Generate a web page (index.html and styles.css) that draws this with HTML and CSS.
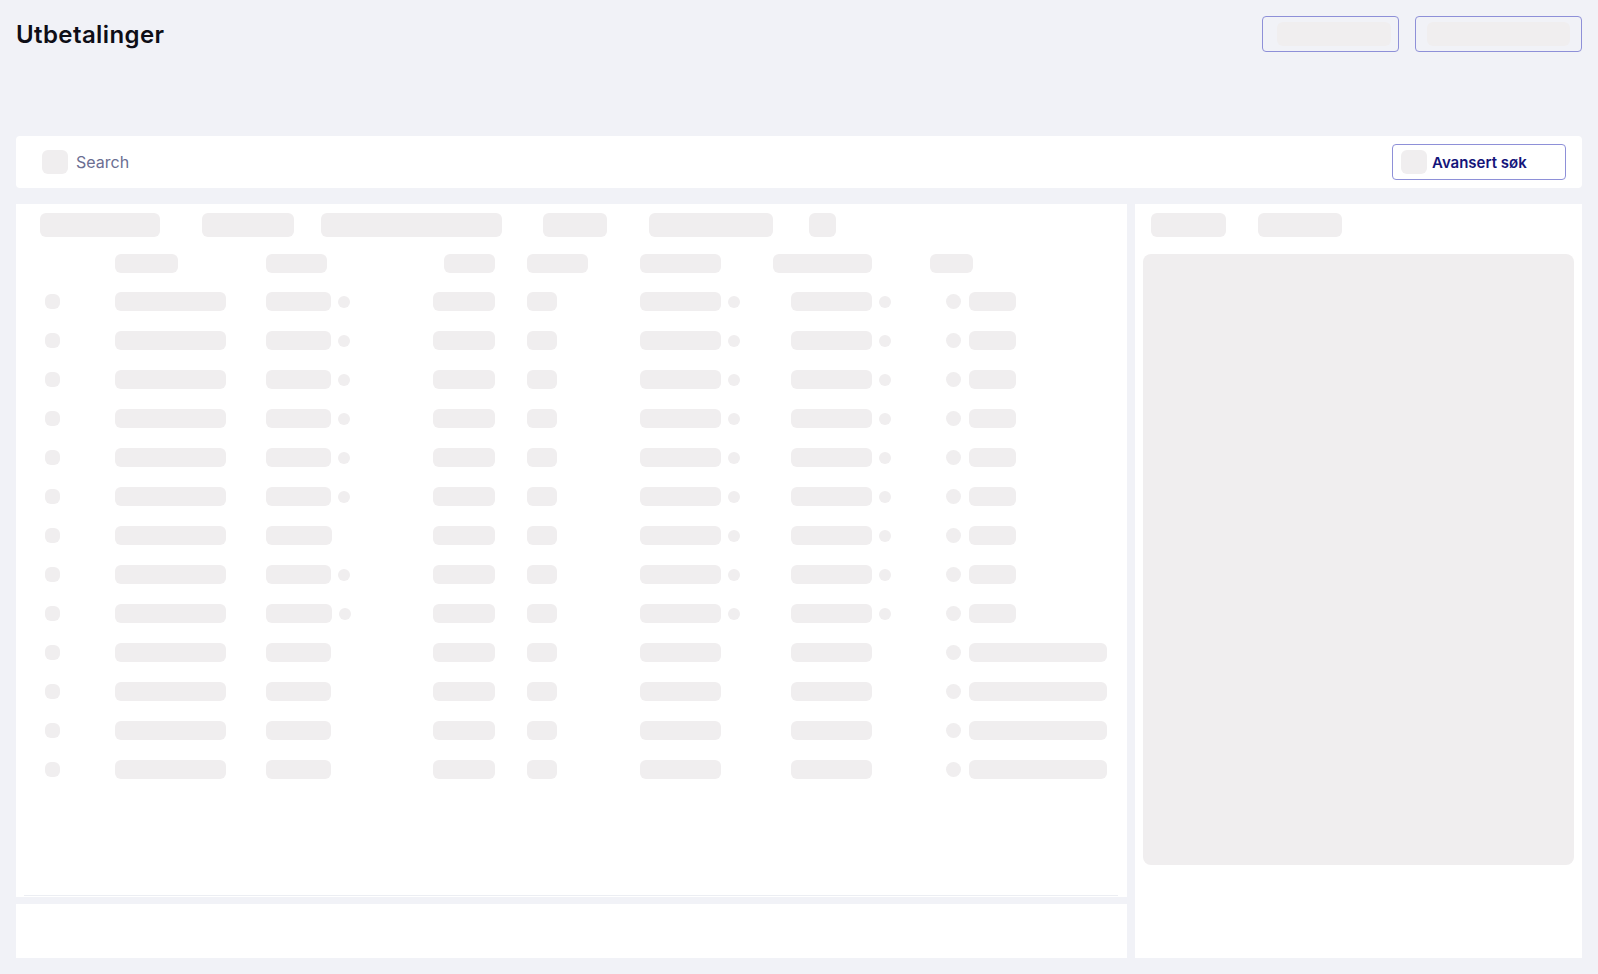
FILE: index.html
```html
<!DOCTYPE html>
<html lang="no">
<head>
  <meta charset="UTF-8" />
  <meta name="viewport" content="width=device-width, initial-scale=1.0" />
  <title>Utbetalinger</title>
  <link rel="stylesheet" href="styles.css">
</head>
<body>
  <div class="page">

    <header class="page-header">
      <h1>Utbetalinger</h1>
      <div class="header-actions">
        <button class="btn-outline btn-export"><span class="skel skel-export"></span></button>
        <button class="btn-outline btn-new"><span class="skel skel-new"></span></button>
      </div>
    </header>

    <div class="search-bar">
      <span class="skel icon-skel"></span>
      <span class="search-label">Search</span>
      <button class="btn-outline btn-advanced"><span class="skel icon-skel"></span>Avansert søk</button>
    </div>

    <div class="workspace">
      <div class="list-column">
        <section class="panel table-panel">
          <div class="toolbar">
            <span class="skel tb tb1"></span>
            <span class="skel tb tb2"></span>
            <span class="skel tb tb3"></span>
            <span class="skel tb tb4"></span>
            <span class="skel tb tb5"></span>
            <span class="skel tb tb6"></span>
          </div>

          <div class="grid-row grid-head">
            <span></span>
            <span class="skel bar w63"></span>
            <span class="skel bar w61"></span>
            <span class="skel bar w51 c-right"></span>
            <span class="skel bar w61 c-type"></span>
            <span class="skel bar w81"></span>
            <span class="skel bar w99 c-right"></span>
            <span class="skel bar w43 c-head-status"></span>
          </div>

          <div id="rows"></div>

          <div class="scroll-track"></div>
        </section>
        <div class="panel footer-panel"></div>
      </div>

      <aside class="panel detail-panel">
        <div class="toolbar detail-toolbar">
          <span class="skel tb dt1"></span>
          <span class="skel tb dt2"></span>
        </div>
        <div class="skel detail-preview"></div>
      </aside>
    </div>

  </div>

  <script>
    // skeleton rows: which cells carry a status dot, and which rows have a long last column
    const rows = [
      { dots: [1, 1, 1] }, { dots: [1, 1, 1] }, { dots: [1, 1, 1] },
      { dots: [1, 1, 1] }, { dots: [1, 1, 1] }, { dots: [1, 1, 1] },
      { dots: [0, 1, 1], wide2: true }, { dots: [1, 1, 1] }, { dots: [1, 1, 1], wide2: true },
      { dots: [0, 0, 0], long: true }, { dots: [0, 0, 0], long: true },
      { dots: [0, 0, 0], long: true }, { dots: [0, 0, 0], long: true }
    ];

    const list = document.getElementById("rows");
    rows.forEach((r) => {
      const row = document.createElement("div");
      row.className = "grid-row";
      row.innerHTML = `
        <span class="skel marker"></span>
        <span class="skel bar w111"></span>
        <span class="skel bar ${r.wide2 ? "w66" : "w65"} ${r.dots[0] ? "has-dot" : ""}"></span>
        <span class="skel bar w62 c-right"></span>
        <span class="skel bar w30 c-type"></span>
        <span class="skel bar w81 ${r.dots[1] ? "has-dot" : ""}"></span>
        <span class="skel bar w81 c-right ${r.dots[2] ? "has-dot" : ""}"></span>
        <span class="status-cell">
          <span class="skel status-dot"></span>
          <span class="skel bar ${r.long ? "w138" : "w47"}"></span>
        </span>`;
      list.appendChild(row);
    });
  </script>
</body>
</html>
```

FILE: styles.css
```css
* {
  box-sizing: border-box;
}

body {
  margin: 0;
  background: #f1f2f7;
  font-family: 'Inter', 'Noto Sans', sans-serif;
  color: #0e0e16;
}

.page {
  height: 100vh;
  padding: 16px;
  display: flex;
  flex-direction: column;
}

/* header */
.page-header {
  display: flex;
  justify-content: space-between;
  align-items: center;
  height: 36px;
  margin-bottom: 84px;
}

.page-header h1 {
  margin: 0;
  font-size: 24px;
  font-weight: 600;
  letter-spacing: 0.4px;
}

.header-actions {
  display: flex;
  gap: 16px;
}

.btn-outline {
  display: flex;
  align-items: center;
  height: 36px;
  padding: 0;
  background: transparent;
  border: 1px solid #8e90d8;
  border-radius: 4px;
  font: inherit;
}

.btn-export {
  width: 137px;
  padding-left: 14px;
}

.btn-new {
  width: 167px;
  padding-left: 11px;
}

.skel {
  display: block;
  background: #f0eeef;
  border-radius: 6px;
}

.skel-export {
  width: 114px;
  height: 24px;
}

.skel-new {
  width: 143px;
  height: 24px;
}

/* search */
.search-bar {
  display: flex;
  align-items: center;
  height: 52px;
  padding: 0 16px 0 26px;
  background: #fff;
  border-radius: 4px;
}

.icon-skel {
  width: 26px;
  height: 24px;
}

.search-label {
  margin-left: 8px;
  font-size: 16px;
  color: #6b6e92;
}

.btn-advanced {
  margin-left: auto;
  width: 174px;
  padding-left: 8px;
  gap: 5px;
  background: #fff;
  color: #14147a;
  font-size: 15px;
  font-weight: 600;
}

/* main area */
.workspace {
  flex: 1;
  min-height: 0;
  margin-top: 16px;
  display: grid;
  grid-template-columns: 1fr 447px;
  gap: 8px;
}

.list-column {
  display: flex;
  flex-direction: column;
  gap: 7px;
}

.panel {
  background: #fff;
}

.table-panel {
  flex: 1;
  display: flex;
  flex-direction: column;
  padding-top: 9px;
}

.footer-panel {
  height: 54px;
}

.toolbar {
  display: flex;
  align-items: center;
  height: 24px;
  padding-left: 24px;
}

.tb {
  height: 24px;
}

.tb1 { width: 120px; margin-right: 42px; }
.tb2 { width: 92px; margin-right: 27px; }
.tb3 { width: 181px; margin-right: 41px; }
.tb4 { width: 64px; margin-right: 42px; }
.tb5 { width: 124px; margin-right: 36px; }
.tb6 { width: 27px; }

/* table grid */
.grid-row {
  display: grid;
  grid-template-columns: 99px 151px 134px 95px 145px 110px 122px 1fr;
  align-items: center;
  height: 39px;
}

.grid-head {
  height: 37px;
  margin-top: 8px;
}

.bar {
  height: 19px;
}

.w30 { width: 30px; }
.w43 { width: 43px; }
.w47 { width: 47px; }
.w51 { width: 51px; }
.w61 { width: 61px; }
.w62 { width: 62px; }
.w63 { width: 63px; }
.w65 { width: 65px; }
.w66 { width: 66px; }
.w81 { width: 81px; }
.w99 { width: 99px; }
.w111 { width: 111px; }
.w138 { width: 138px; }

.c-right {
  justify-self: end;
}

.c-type {
  margin-left: 32px;
}

.c-head-status {
  margin-left: 58px;
}

.has-dot {
  position: relative;
}

.has-dot::after {
  content: "";
  position: absolute;
  top: 50%;
  left: calc(100% + 7px);
  width: 12px;
  height: 12px;
  margin-top: -6px;
  border-radius: 50%;
  background: #f0eeef;
}

.marker {
  width: 15px;
  height: 15px;
  margin-left: 29px;
  border-radius: 6px;
}

.status-cell {
  display: flex;
  align-items: center;
  gap: 8px;
  margin-left: 74px;
}

.status-dot {
  width: 15px;
  height: 15px;
  border-radius: 50%;
}

.scroll-track {
  margin: auto 9px 1px 8px;
  height: 1px;
  background: #eceef3;
}

/* detail side */
.detail-panel {
  display: flex;
  flex-direction: column;
  padding: 9px 8px 0;
}

.detail-toolbar {
  padding-left: 8px;
}

.dt1 { width: 75px; margin-right: 32px; }
.dt2 { width: 84px; }

.detail-preview {
  height: 611px;
  margin-top: 17px;
  border-radius: 8px;
}
```
